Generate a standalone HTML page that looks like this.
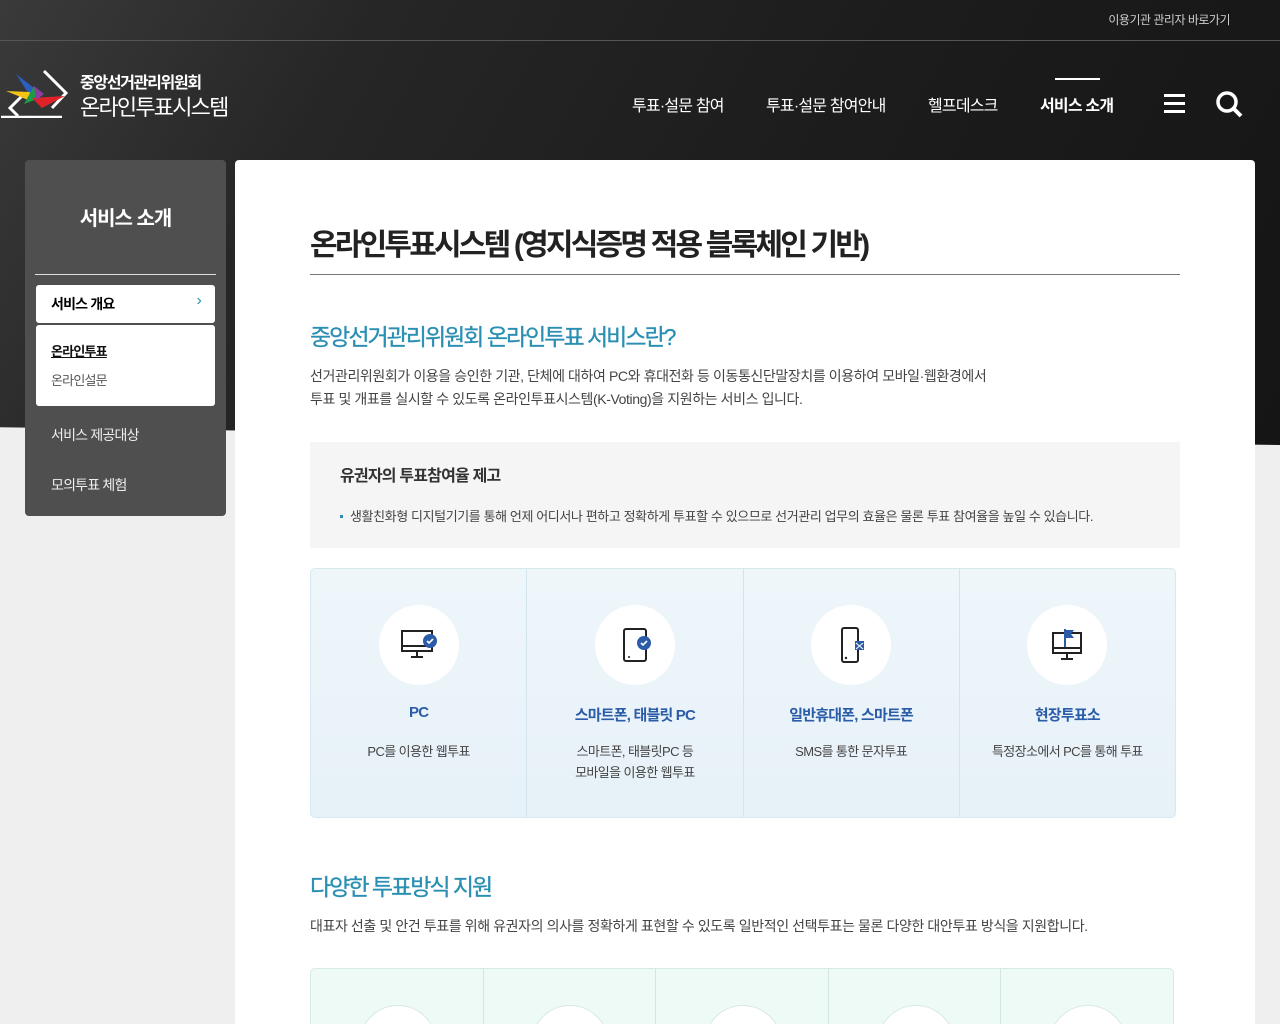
<!DOCTYPE html>
<html style="overflow:hidden;height:1024px"><head><meta charset="utf-8"><style>
*{margin:0;padding:0;box-sizing:border-box}
body{width:1280px;height:1024px;overflow:hidden;background:#efefef;font-family:"Liberation Sans","Noto Sans CJK KR",sans-serif;position:relative}
.dark{position:absolute;left:0;top:0;width:1280px;height:445px;background:linear-gradient(120deg,#3a3a3a 0%,#262626 25%,#1c1c1c 60%,#151515 100%);clip-path:polygon(0 0,100% 0,100% 100%,0 96%)}
.topline{position:absolute;left:0;top:40px;width:1280px;height:1px;background:#555}
.util{position:absolute;right:50px;top:11px;color:#ccc;font-size:12px;letter-spacing:-.5px}
.logo1{position:absolute;left:80px;top:69px;color:#fff;font-size:16px;font-weight:bold;letter-spacing:-1.3px}
.logo2{position:absolute;left:80px;top:90px;color:#fff;font-size:22px;letter-spacing:-1.8px}
.nav{position:absolute;top:92px;color:#fff;font-size:16px;letter-spacing:-.8px}
.side{position:absolute;left:25px;top:160px;width:201px;height:356px;background:#4f4f4f;border-radius:4px}
.side h2{position:absolute;left:0;width:201px;top:42px;text-align:center;color:#fff;font-size:20px;letter-spacing:-1px}
.side .hr{position:absolute;left:10px;right:10px;top:114px;height:1px;background:#ddd}
.box1{position:absolute;left:11px;top:125px;width:179px;height:38px;background:#fff;border-radius:3px;font-size:14px;font-weight:bold;padding:9px 15px;letter-spacing:-.8px}
.box2{position:absolute;left:11px;top:165px;width:179px;height:81px;background:#fff;border-radius:3px;font-size:13px;padding:16px 15px;letter-spacing:-.8px;color:#555}
.si{position:absolute;left:26px;color:#eee;font-size:14px;letter-spacing:-.8px}
.main{position:absolute;left:235px;top:160px;width:1020px;height:864px;background:#fff;border-radius:4px 4px 0 0;overflow:hidden}
h1{position:absolute;left:75px;top:60px;font-size:30px;letter-spacing:-2.8px;color:#222;font-weight:bold}
.h1line{position:absolute;left:75px;top:114px;width:870px;height:1px;background:#777}
h3{position:absolute;left:75px;font-size:23px;letter-spacing:-2px;color:#2a8fb3;font-weight:normal;-webkit-text-stroke:.3px #2a8fb3}
p.t{position:absolute;left:75px;font-size:14px;line-height:23px;color:#444;letter-spacing:-.4px}
.gray{position:absolute;left:75px;top:282px;width:870px;height:106px;background:#f5f5f5}
.gray b{position:absolute;left:30px;top:20px;font-size:16px;letter-spacing:-.8px;color:#333}
.gray span{position:absolute;left:40px;top:64px;font-size:13px;color:#444;letter-spacing:-.4px}
.gray i{position:absolute;left:30px;top:73px;width:3px;height:3px;background:#2a8fb3}
.cards{position:absolute;left:75px;top:408px;width:866px;height:250px;border:1px solid #d8e8ef;border-radius:5px;background:linear-gradient(#eef6fa,#e6f1f8);display:flex}
.card{flex:1;border-right:1px solid #d4e4ec;text-align:center;position:relative}
.card:last-child{border-right:none}
.circ{width:80px;height:80px;border-radius:50%;background:#fff;margin:36px auto 0;display:flex;align-items:center;justify-content:center}
.card .ti{position:absolute;top:135px;width:100%;font-size:15px;font-weight:bold;color:#2b5ca8;letter-spacing:-.8px}
.card .de{position:absolute;top:172px;width:100%;font-size:13px;color:#444;line-height:21px;letter-spacing:-.6px}
.cards2{position:absolute;left:75px;top:808px;width:864px;height:80px;border:1px solid #d5ebe4;border-radius:5px;background:#eefaf5;display:flex}
.cards2 div{flex:1;border-right:1px solid #d5e6e0;position:relative}
.cards2 div:last-child{border-right:none}
.cards2 div::after{content:"";position:absolute;left:50%;top:36px;margin-left:-38px;width:76px;height:76px;border-radius:50%;background:#fff;border:1px solid #d8e8e3}
</style></head><body>
<div class="dark"></div>
<div class="topline"></div>
<div class="util">이용기관 관리자 바로가기</div>
<svg style="position:absolute;left:0;top:68px" width="70" height="50" viewBox="0 0 70 50">
<path d="M44 3 L66 25 L52 40 M22 28 L10 40 L18 48" stroke="#fff" stroke-width="3" fill="none"/>
<path d="M1 49 L62 49" stroke="#fff" stroke-width="2.5"/>
<path d="M16 6 L34 20 L30 28Z" fill="#2a5fbf"/><path d="M6 23 L30 24 L28 32Z" fill="#f2c418"/><path d="M24 36 L34 18 L40 30Z" fill="#1c9c45"/><path d="M32 30 L65 28 L42 40Z" fill="#e02328"/><path d="M34 18 L44 26 L36 32Z" fill="#8b3fa0"/>
</svg>
<div class="logo1">중앙선거관리위원회</div>
<div class="logo2">온라인투표시스템</div>
<div class="nav" style="left:632px">투표·설문 참여</div>
<div class="nav" style="left:766px">투표·설문 참여안내</div>
<div class="nav" style="left:928px">헬프데스크</div>
<div class="nav" style="left:1040px;font-weight:bold">서비스 소개</div>
<div style="position:absolute;left:1055px;top:78px;width:45px;height:2px;background:#fff"></div>
<div style="position:absolute;left:1164px;top:94px;width:21px;height:3px;background:#fff;box-shadow:0 8px 0 #fff,0 16px 0 #fff"></div>
<svg style="position:absolute;left:1215px;top:90px" width="30" height="30"><circle cx="12" cy="12" r="9" stroke="#fff" stroke-width="3.5" fill="none"/><path d="M19 19 L26 26" stroke="#fff" stroke-width="4"/></svg>

<div class="side"><h2>서비스 소개</h2><div class="hr"></div>
<div class="box1">서비스 개요<span style="position:absolute;right:14px;top:7px;color:#2a8fb3;font-weight:normal;font-size:16px">›</span></div>
<div class="box2"><div style="color:#111;font-weight:bold;text-decoration:underline">온라인투표</div><div style="margin-top:10px">온라인설문</div></div>
<div class="si" style="top:265px">서비스 제공대상</div>
<div class="si" style="top:315px">모의투표 체험</div>
</div>

<div class="main">
<h1>온라인투표시스템 (영지식증명 적용 블록체인 기반)</h1>
<div class="h1line"></div>
<h3 style="top:158px">중앙선거관리위원회 온라인투표 서비스란?</h3>
<p class="t" style="top:205px">선거관리위원회가 이용을 승인한 기관, 단체에 대하여 PC와 휴대전화 등 이동통신단말장치를 이용하여 모바일·웹환경에서<br>투표 및 개표를 실시할 수 있도록 온라인투표시스템(K-Voting)을 지원하는 서비스 입니다.</p>
<div class="gray"><b>유권자의 투표참여율 제고</b><i></i><span>생활친화형 디지털기기를 통해 언제 어디서나 편하고 정확하게 투표할 수 있으므로 선거관리 업무의 효율은 물론 투표 참여율을 높일 수 있습니다.</span></div>
<div class="cards">
<div class="card"><div class="circ"><svg width="40" height="36"><rect x="3" y="4" width="30" height="20" fill="none" stroke="#222" stroke-width="2"/><path d="M3 19H33M18 24V30M12 30H24" stroke="#222" stroke-width="2"/><circle cx="31" cy="14" r="7" fill="#2b5ca8"/><path d="M28 14l2 2 4-4" stroke="#fff" stroke-width="1.6" fill="none"/></svg></div><div class="ti">PC</div><div class="de">PC를 이용한 웹투표</div></div>
<div class="card"><div class="circ"><svg width="40" height="36"><rect x="9" y="2" width="22" height="32" rx="2" fill="none" stroke="#222" stroke-width="2"/><circle cx="14" cy="30" r="1" fill="#222"/><circle cx="29" cy="16" r="7" fill="#2b5ca8"/><path d="M26 16l2 2 4-4" stroke="#fff" stroke-width="1.6" fill="none"/></svg></div><div class="ti">스마트폰, 태블릿 PC</div><div class="de">스마트폰, 태블릿PC 등<br>모바일을 이용한 웹투표</div></div>
<div class="card"><div class="circ"><svg width="40" height="40"><rect x="11" y="3" width="16" height="34" rx="2" fill="none" stroke="#222" stroke-width="2"/><circle cx="15" cy="33" r="1.2" fill="#222"/><rect x="24" y="16" width="9" height="9" fill="#2b5ca8"/><path d="M25 18l3.5 3 3.5-3M25 24l3.5-3 3.5 3" stroke="#fff" stroke-width="1" fill="none"/></svg></div><div class="ti">일반휴대폰, 스마트폰</div><div class="de">SMS를 통한 문자투표</div></div>
<div class="card"><div class="circ"><svg width="40" height="36"><rect x="6" y="6" width="28" height="20" fill="none" stroke="#222" stroke-width="2"/><path d="M6 21H34M20 26V32M14 32H26" stroke="#222" stroke-width="2"/><path d="M18 2V20" stroke="#2b5ca8" stroke-width="2"/><path d="M19 3H27L24 7L27 11H19Z" fill="#2b5ca8"/></svg></div><div class="ti">현장투표소</div><div class="de">특정장소에서 PC를 통해 투표</div></div>
</div>
<h3 style="top:708px">다양한 투표방식 지원</h3>
<p class="t" style="top:755px">대표자 선출 및 안건 투표를 위해 유권자의 의사를 정확하게 표현할 수 있도록 일반적인 선택투표는 물론 다양한 대안투표 방식을 지원합니다.</p>
<div class="cards2"><div></div><div></div><div></div><div></div><div></div></div>
</div>
</body></html>
